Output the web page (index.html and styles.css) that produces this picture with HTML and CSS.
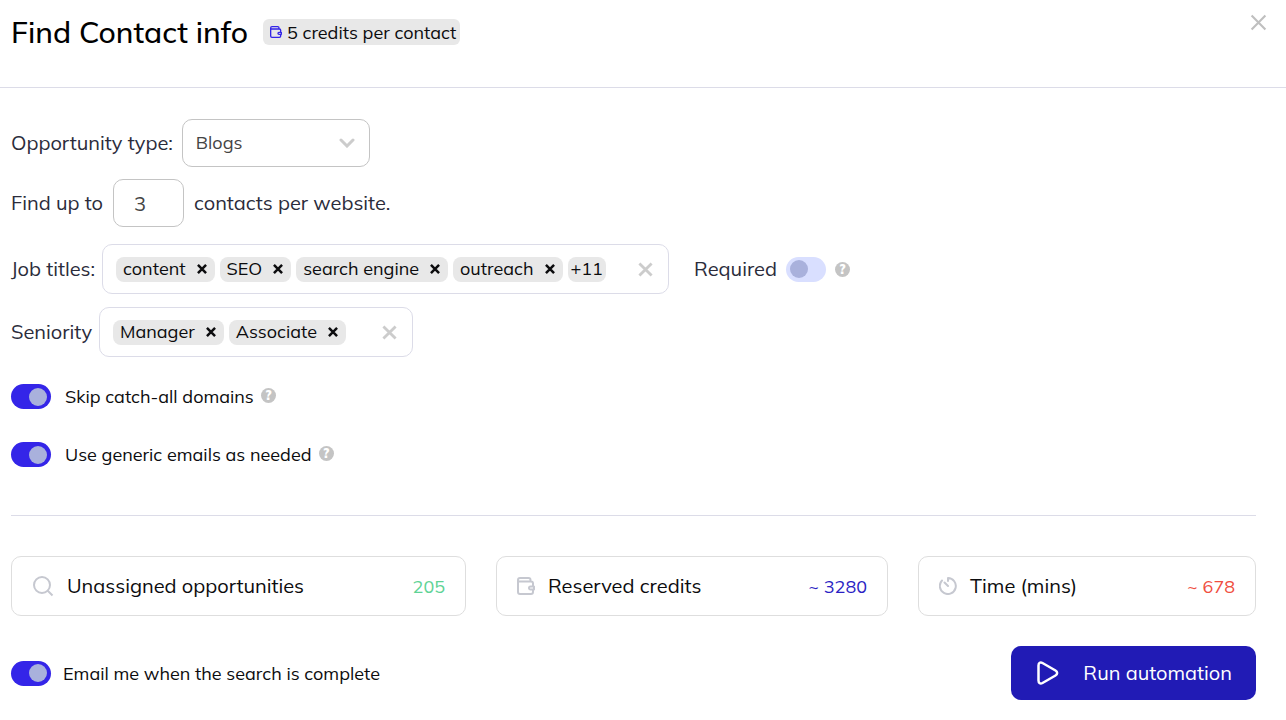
FILE: index.html
```
<!DOCTYPE html>
<html lang="en">

<head>
  <meta charset="UTF-8">
  <meta name="viewport" content="width=device-width, initial-scale=1">
  <title>Find Contact info</title>
  <link rel="stylesheet" href="styles.css">
</head>

<body>
  <!-- shared icons -->
  <svg class="sprite" aria-hidden="true">
    <symbol id="icon-cross" viewBox="0 0 16 16">
      <path d="M1.500 1.500l13 13M14.500 1.500l-13 13" fill="none" stroke="currentColor" />
    </symbol>
    <symbol id="icon-wallet" viewBox="0 0 18 18">
      <path d="M1 3v12a2 2 0 0 0 2 2h11a2 2 0 0 0 2-2v-2M16 9V6.500a2 2 0 0 0-2-2H2.500C1.500 4.500 1 4 1 3s.7-2 2-2h8.500a2 2 0 0 1 2 2v1.500M17 9.500v3h-3.500a1.500 1.500 0 0 1 0-3z" fill="none" stroke="currentColor" stroke-linejoin="round" />
    </symbol>
  </svg>

  <header class="header">
    <h1 class="header__title">Find Contact info</h1>
    <span class="credits">
      <svg class="credits__icon"><use href="#icon-wallet" /></svg>
      5 credits per contact
    </span>
    <button type="button" class="close" aria-label="Close">
      <svg><use href="#icon-cross" /></svg>
    </button>
  </header>

  <main class="content">
    <form class="form">
      <div class="row row--type">
        <label for="type">Opportunity type:</label>
        <div class="select">
          <select id="type" class="field">
            <option>Blogs</option>
            <option>Podcasts</option>
          </select>
          <svg class="select__arrow" viewBox="0 0 16 10">
            <path d="M2 2l6 6 6-6" fill="none" stroke="currentColor" stroke-width="3" stroke-linecap="round" />
          </svg>
        </div>
      </div>

      <div class="row row--count">
        <label for="count">Find up to</label>
        <input type="text" id="count" class="field field--count" inputmode="numeric" value="3">
        <span>contacts per website.</span>
      </div>

      <div class="row row--tags">
        <span id="titles-label">Job titles:</span>
        <div class="tags tags--titles" role="group" aria-labelledby="titles-label">
          <span class="tag">content <button type="button" class="tag__remove" aria-label="Remove content"><svg><use href="#icon-cross" /></svg></button></span>
          <span class="tag">SEO <button type="button" class="tag__remove" aria-label="Remove SEO"><svg><use href="#icon-cross" /></svg></button></span>
          <span class="tag">search engine <button type="button" class="tag__remove" aria-label="Remove search engine"><svg><use href="#icon-cross" /></svg></button></span>
          <span class="tag">outreach <button type="button" class="tag__remove" aria-label="Remove outreach"><svg><use href="#icon-cross" /></svg></button></span>
          <span class="tag tag--more">+11</span>
          <button type="button" class="tags__clear" aria-label="Clear job titles"><svg><use href="#icon-cross" /></svg></button>
        </div>
        <div class="required">
          <label for="required">Required</label>
          <input type="checkbox" id="required" class="toggle">
          <button type="button" class="help" aria-label="About required">?</button>
        </div>
      </div>

      <div class="row row--tags">
        <span id="seniority-label">Seniority</span>
        <div class="tags tags--seniority" role="group" aria-labelledby="seniority-label">
          <span class="tag">Manager <button type="button" class="tag__remove" aria-label="Remove Manager"><svg><use href="#icon-cross" /></svg></button></span>
          <span class="tag">Associate <button type="button" class="tag__remove" aria-label="Remove Associate"><svg><use href="#icon-cross" /></svg></button></span>
          <button type="button" class="tags__clear" aria-label="Clear seniority"><svg><use href="#icon-cross" /></svg></button>
        </div>
      </div>

      <div class="options">
        <div class="option">
          <input type="checkbox" id="skip" class="toggle" checked>
          <label for="skip">Skip catch-all domains</label>
          <button type="button" class="help" aria-label="About catch-all domains">?</button>
        </div>
        <div class="option">
          <input type="checkbox" id="generic" class="toggle" checked>
          <label for="generic">Use generic emails as needed</label>
          <button type="button" class="help" aria-label="About generic emails">?</button>
        </div>
      </div>
    </form>

    <section class="stats">
      <div class="stat">
        <svg class="stat__icon" viewBox="0 0 22 22">
          <circle cx="10" cy="10" r="8" fill="none" stroke="currentColor" stroke-width="2" />
          <path d="M15.500 15.500l5 5" stroke="currentColor" stroke-width="2" />
        </svg>
        <span class="stat__name">Unassigned opportunities</span>
        <span class="stat__value stat__value--green">205</span>
      </div>
      <div class="stat">
        <svg class="stat__icon stat__icon--small"><use href="#icon-wallet" /></svg>
        <span class="stat__name">Reserved credits</span>
        <span class="stat__value stat__value--blue">~ 3280</span>
      </div>
      <div class="stat">
        <svg class="stat__icon stat__icon--small" viewBox="0 0 18 18">
          <path d="M9 4V1a8 8 0 1 1-6 2.500M5.500 5.500L9 9" fill="none" stroke="currentColor" stroke-width="2" stroke-linecap="round" stroke-linejoin="round" />
        </svg>
        <span class="stat__name">Time (mins)</span>
        <span class="stat__value stat__value--red">~ 678</span>
      </div>
    </section>

    <footer class="footer">
      <div class="option option--email">
        <input type="checkbox" id="email" class="toggle" checked>
        <label for="email">Email me when the search is complete</label>
      </div>
      <button type="button" class="run">
        <svg class="run__icon" viewBox="0 0 22 24">
          <path d="M1.500 4.500v15c0 2.700 1.800 3.700 4 2.500l13-7.500c2.200-1.300 2.200-3.700 0-5L5.500 2C3.300 .8 1.500 1.800 1.500 4.500z" fill="none" stroke="currentColor" stroke-width="2.500" />
        </svg>
        Run automation
      </button>
    </footer>
  </main>
</body>

</html>
```

FILE: styles.css
```
* {
  box-sizing: border-box;
  padding: 0;
  margin: 0;
}

body {
  font-family: Mulish, Lato, sans-serif;
  font-size: 18px;
  color: #0c0c0e;
  background-color: #fff;
}

button,
input,
select {
  font: inherit;
  color: inherit;
}

button {
  border: 0;
  background: none;
  cursor: pointer;
}

.sprite {
  display: none;
}

/* header */
.header {
  display: flex;
  align-items: flex-start;
  gap: 15px;
  height: 88px;
  padding: 14px 19px 0 11px;
  border-bottom: 1px solid #dcdce8;
}

.header__title {
  font-size: 30px;
  font-weight: 500;
  line-height: 36px;
  color: #000;
}

.credits {
  display: flex;
  align-items: center;
  gap: 5px;
  height: 26px;
  margin-top: 5px;
  padding: 0 4px 0 7px;
  border-radius: 6px;
  background-color: #e8e8e8;
}

.credits__icon {
  width: 12px;
  height: 12px;
  stroke-width: 2;
  color: #3425e8;
}

.close {
  display: flex;
  margin-left: auto;
  color: #bfbfbf;
}

.close svg {
  width: 17px;
  height: 17px;
  stroke-width: 2;
}

/* form */
.content {
  padding: 31px 30px 20px 11px;
}

.row {
  display: flex;
  align-items: center;
  gap: 7px;
  min-height: 48px;
  font-size: 20px;
  line-height: 24px;
  color: #2b2c3b;
}

.row--type {
  gap: 9px;
}

.row--count {
  gap: 10px;
  margin-top: 12px;
}

.row--tags {
  margin-top: 13px;
}

.row--count + .row--tags {
  margin-top: 17px;
}

.field {
  height: 48px;
  border: 1px solid #c4c4c4;
  border-radius: 10px;
  outline: none;
  background-color: #fff;
  color: #444;
}

.field--count {
  width: 71px;
  padding: 0 20px;
}

.select {
  position: relative;
  width: 188px;
}

.select .field {
  appearance: none;
  width: 100%;
  padding: 0 13px;
  font-size: 18px;
}

.select__arrow {
  position: absolute;
  top: 19px;
  right: 15px;
  width: 16px;
  height: 10px;
  color: #ccc;
  pointer-events: none;
}

/* tag inputs */
.tags {
  display: flex;
  align-items: center;
  gap: 5px;
  height: 50px;
  padding: 0 13px;
  border: 1px solid #dcdce8;
  border-radius: 10px;
  font-size: 18px;
  color: #0c0c0e;
}

.tags--titles {
  width: 567px;
}

.tags--seniority {
  width: 314px;
}

.tag {
  display: flex;
  align-items: center;
  gap: 11px;
  height: 25px;
  padding: 0 8px 0 7px;
  border-radius: 8px;
  background-color: #e8e8e8;
  white-space: nowrap;
}

.tag--more {
  padding: 0 3px;
}

.tag__remove,
.tags__clear {
  display: flex;
}

.tag__remove svg {
  width: 10px;
  height: 10px;
  stroke-width: 4;
}

.tags__clear {
  margin-left: auto;
  margin-right: 2px;
  color: #ccc;
}

.tags__clear svg {
  width: 15px;
  height: 15px;
  stroke-width: 3;
}

.required {
  display: flex;
  align-items: center;
  gap: 9px;
  margin-left: 18px;
}

/* toggles */
.toggle {
  appearance: none;
  display: flex;
  align-items: center;
  width: 40px;
  height: 25px;
  padding: 0 4px;
  border-radius: 13px;
  background-color: #d9dfff;
  cursor: pointer;
}

.toggle::before {
  content: "";
  width: 18px;
  height: 18px;
  border-radius: 50%;
  background-color: #a9b1dc;
}

.toggle:checked {
  justify-content: flex-end;
  background-color: #3425e8;
}

.help {
  width: 15px;
  height: 15px;
  border-radius: 50%;
  background-color: #c4c4c4;
  font-size: 13px;
  font-weight: 900;
  line-height: 15px;
  color: #fff;
}

.options {
  display: grid;
  gap: 33px;
  padding: 27px 0 48px;
  border-bottom: 1px solid #dcdce8;
}

.option {
  display: flex;
  align-items: center;
  height: 25px;
}

.option label {
  margin-left: 14px;
}

.option--email label {
  margin-left: 12px;
}

.option .help {
  margin-left: 7px;
  margin-bottom: 3px;
}

/* stats */
.stats {
  display: grid;
  grid-template-columns: 455fr 392fr 338fr;
  gap: 30px;
  margin-top: 40px;
}

.stat {
  display: flex;
  align-items: center;
  height: 60px;
  padding: 0 20px;
  border: 1px solid #dedede;
  border-radius: 10px;
}

.stat__icon {
  width: 22px;
  height: 22px;
  color: #c6c8d0;
}

.stat__icon--small {
  width: 18px;
  height: 18px;
  stroke-width: 2;
}

.stat__name {
  margin-left: 13px;
  font-size: 20px;
  line-height: 24px;
}

.stat__value {
  margin-left: auto;
  font-size: 18px;
}

.stat__value--green {
  color: #5fd396;
}

.stat__value--blue {
  color: #2b1fc4;
}

.stat__value--red {
  color: #f04e40;
}

/* footer */
.footer {
  display: flex;
  align-items: center;
  justify-content: space-between;
  margin-top: 30px;
}

.run {
  display: flex;
  align-items: center;
  gap: 24px;
  height: 54px;
  padding: 0 24px 0 26px;
  border-radius: 10px;
  background-color: #211bb5;
  font-size: 20px;
  line-height: 24px;
  color: #fff;
}

.run__icon {
  width: 22px;
  height: 24px;
}
```
